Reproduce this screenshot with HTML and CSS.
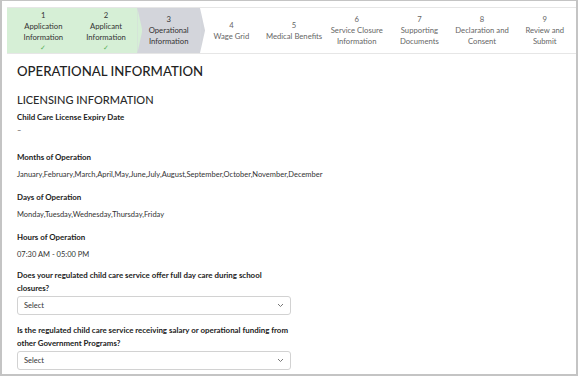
FILE: index.html
```html
<!DOCTYPE html>
<html lang="en">
<head>
  <meta charset="UTF-8" />
  <title>Operational Information</title>
  <link rel="stylesheet" href="styles.css">
</head>
<body>
  <div class="frame">
    <div class="stepper">
      <div class="step done">
        <span class="num">1</span>
        <span class="label">Application<br>Information</span>
        <span class="check">&#10003;</span>
      </div>
      <div class="step done last-done">
        <span class="num">2</span>
        <span class="label">Applicant<br>Information</span>
        <span class="check">&#10003;</span>
      </div>
      <div class="step current">
        <span class="num">3</span>
        <span class="label">Operational<br>Information</span>
      </div>
      <div class="step">
        <span class="num">4</span>
        <span class="label">Wage Grid</span>
      </div>
      <div class="step">
        <span class="num">5</span>
        <span class="label">Medical Benefits</span>
      </div>
      <div class="step">
        <span class="num">6</span>
        <span class="label">Service Closure<br>Information</span>
      </div>
      <div class="step">
        <span class="num">7</span>
        <span class="label">Supporting<br>Documents</span>
      </div>
      <div class="step">
        <span class="num">8</span>
        <span class="label">Declaration and<br>Consent</span>
      </div>
      <div class="step">
        <span class="num">9</span>
        <span class="label">Review and<br>Submit</span>
      </div>
    </div>

    <div class="content">
      <h1>OPERATIONAL INFORMATION</h1>
      <h2>LICENSING INFORMATION</h2>

      <div class="field expiry">
        <div class="field-label">Child Care License Expiry Date</div>
        <div class="field-value dash">&ndash;</div>
      </div>
      <div class="field">
        <div class="field-label">Months of Operation</div>
        <div class="field-value">January,February,March,April,May,June,July,August,September,October,November,December</div>
      </div>
      <div class="field">
        <div class="field-label">Days of Operation</div>
        <div class="field-value">Monday,Tuesday,Wednesday,Thursday,Friday</div>
      </div>
      <div class="field">
        <div class="field-label">Hours of Operation</div>
        <div class="field-value">07:30 AM - 05:00 PM</div>
      </div>

      <div class="question">
        <div class="question-label">Does your regulated child care service offer full day care during school closures?</div>
        <div class="select">
          <span>Select</span>
          <svg width="7" height="5" viewBox="0 0 7 5"><path d="M1 1l2.5 2.5L6 1" fill="none" stroke="#777" stroke-width="1"/></svg>
        </div>
      </div>
      <div class="question">
        <div class="question-label">Is the regulated child care service receiving salary or operational funding from other Government Programs?</div>
        <div class="select">
          <span>Select</span>
          <svg width="7" height="5" viewBox="0 0 7 5"><path d="M1 1l2.5 2.5L6 1" fill="none" stroke="#777" stroke-width="1"/></svg>
        </div>
      </div>
    </div>
  </div>
</body>
</html>
```

FILE: styles.css
```css
* {
  box-sizing: border-box;
}

body {
  margin: 0;
  font-family: Lato, "Open Sans", sans-serif;
  color: #222;
  background: #fff;
}

.frame {
  width: 578px;
  height: 376px;
  border: 1px solid #c4c4c4;
  border-width: 1px 2px 2px 2px;
  padding: 6px 0 0 5px;
  overflow: hidden;
}

.stepper {
  display: flex;
  height: 47px;
  border-top: 1px solid #e6e6e6;
  border-bottom: 1px solid #e6e6e6;
  padding-left: 5px;
  position: relative;
}

.step {
  flex: 1;
  display: flex;
  flex-direction: column;
  align-items: center;
  justify-content: center;
  font-size: 7.7px;
  line-height: 11px;
  text-align: center;
  color: #666;
  position: relative;
}

.step .num {
  display: block;
}

.step.done,
.step.current {
  color: #333;
}

.step.done {
  background: #d6efd6;
}

.step.done:first-child {
  margin-left: -5px;
  padding-left: 5px;
  flex: 0 0 67.7px;
}

.step.current {
  background: #d3d5db;
}

/* chevron tips */
.step.last-done::after,
.step.current::after {
  content: "";
  position: absolute;
  right: -5px;
  top: 0;
  bottom: 0;
  width: 5px;
  clip-path: polygon(0 0, 100% 50%, 0 100%);
  z-index: 1;
}

.step.last-done::after {
  background: #d6efd6;
}

.step.current::after {
  background: #d3d5db;
}

.step .check {
  color: #5bb05b;
  font-size: 6.5px;
  line-height: 9px;
}

.content {
  padding: 8px 0 0 10px;
}

h1 {
  margin: 0;
  font-size: 13.2px;
  font-weight: 500;
  line-height: 18px;
  color: #222;
}

h2 {
  margin: 13px 0 4px;
  font-size: 11px;
  font-weight: 500;
  line-height: 14px;
  color: #2a2a2a;
}

.field {
  margin-bottom: 10px;
}

.field.expiry {
  margin-bottom: 14px;
}

.field-label,
.question-label {
  font-size: 7.9px;
  font-weight: bold;
  line-height: 12px;
  color: #222;
}

.question-label {
  line-height: 13px;
}

.field-value {
  margin-top: 6px;
  font-size: 7.5px;
  line-height: 12px;
  color: #333;
}

.field-value.dash {
  margin-top: 2px;
}

.question {
  width: 278px;
  margin-top: -2px;
}

.question + .question {
  margin-top: 9px;
}

.select {
  display: flex;
  align-items: center;
  justify-content: space-between;
  width: 274px;
  height: 19px;
  margin-top: 1px;
  padding: 0 6px 0 6px;
  border: 1px solid #d2d2d2;
  border-radius: 3px;
  font-size: 7.5px;
  color: #333;
}
```
